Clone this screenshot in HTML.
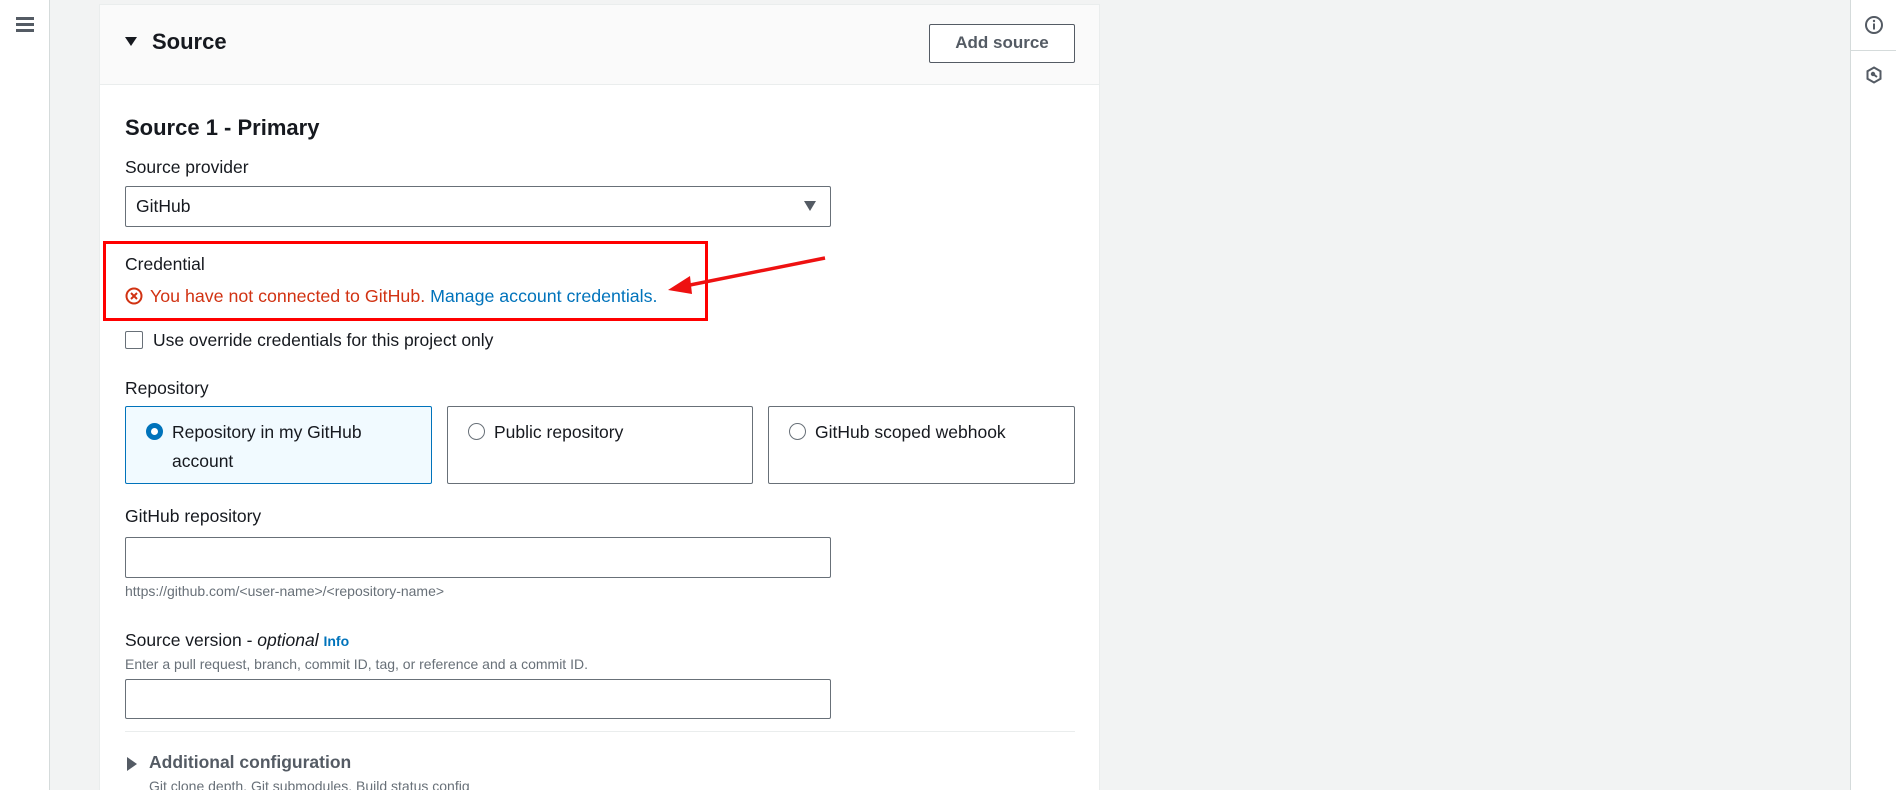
<!DOCTYPE html>
<html style="overflow:hidden;width:1896px;height:790px"><head><style>
*{box-sizing:border-box;margin:0;padding:0}
body{width:1896px;height:790px;overflow:hidden;background:#f2f3f3;font-family:"Liberation Sans",sans-serif;color:#16191f;position:relative}
.a{position:absolute;white-space:nowrap}
.lbl{font-size:17.5px;color:#16191f}
.inp{position:absolute;border:1.5px solid #687078;border-radius:2px;background:#fff}
.tile{position:absolute;top:406px;height:78px;border:1.5px solid #687078;border-radius:2px;background:#fff}
.radio{position:absolute;left:20px;top:16px;width:17px;height:17px;border:1.5px solid #687078;border-radius:50%;background:#fff}
.tt{position:absolute;left:46px;top:11px;font-size:17.5px;line-height:29px}
</style></head><body>
<div class="a" style="left:0;top:0;width:50px;height:790px;background:#fff;border-right:1.5px solid #d5dbdb"></div>
<div class="a" style="left:16px;top:17px;width:18px;height:3px;background:#545b64"></div>
<div class="a" style="left:16px;top:23px;width:18px;height:3px;background:#545b64"></div>
<div class="a" style="left:16px;top:29px;width:18px;height:3px;background:#545b64"></div>
<div class="a" style="left:1850px;top:0;width:46px;height:790px;background:#fff;border-left:1.5px solid #d5dbdb"></div>
<div class="a" style="left:1851px;top:50px;width:45px;height:1px;background:#d5dbdb"></div>
<svg class="a" style="left:1864px;top:15px" width="20" height="20" viewBox="0 0 20 20"><circle cx="10" cy="10" r="8" fill="none" stroke="#545b64" stroke-width="2"/><rect x="9" y="8.5" width="2" height="6" fill="#545b64"/><circle cx="10" cy="6" r="1.2" fill="#545b64"/></svg>
<svg class="a" style="left:1865px;top:66px" width="18" height="18" viewBox="0 0 18 18"><path d="M9 1.5L15.5 5.2V12.8L9 16.5L2.5 12.8V5.2Z" fill="none" stroke="#545b64" stroke-width="2"/><circle cx="8" cy="8" r="2.2" fill="#545b64"/><path d="M8 8L12 11" stroke="#545b64" stroke-width="2"/></svg>
<div class="a" style="left:99px;top:4px;width:1001px;height:786px;background:#fff;border:1px solid #eaeded;border-bottom:none"></div>
<div class="a" style="left:100px;top:5px;width:999px;height:80px;background:#fafafa;border-bottom:1px solid #eaeded"></div>
<svg class="a" style="left:124px;top:36px" width="14" height="12" viewBox="0 0 14 12"><path d="M1 1H13L7 10Z" fill="#16191f"/></svg>
<div class="a" style="left:152px;top:28px;font-size:22px;font-weight:bold;line-height:28px">Source</div>
<div class="a" style="left:929px;top:24px;width:146px;height:39px;border:1.5px solid #545b64;border-radius:2px;background:#fff;font-size:17px;font-weight:bold;color:#545b64;text-align:center;line-height:36px">Add source</div>

<div class="a" style="left:125px;top:114px;font-size:22px;font-weight:bold;line-height:28px">Source 1 - Primary</div>
<div class="a lbl" style="left:125px;top:157px">Source provider</div>
<div class="inp" style="left:125px;top:186px;width:706px;height:41px"></div>
<div class="a" style="left:136px;top:196px;font-size:17.5px">GitHub</div>
<svg class="a" style="left:803px;top:200px" width="14" height="12" viewBox="0 0 14 12"><path d="M1 1H13L7 11Z" fill="#545b64"/></svg>

<div class="a lbl" style="left:125px;top:254px">Credential</div>
<svg class="a" style="left:125px;top:287px" width="18" height="18" viewBox="0 0 18 18"><circle cx="9" cy="9" r="7.5" fill="none" stroke="#d13212" stroke-width="2"/><path d="M6 6L12 12M12 6L6 12" stroke="#d13212" stroke-width="2"/></svg>
<div class="a" style="left:150px;top:286px;font-size:17.8px;color:#d13212">You have not connected to GitHub. <span style="color:#0073bb">Manage account credentials.</span></div>
<div class="a" style="left:103px;top:241px;width:605px;height:80px;border:3px solid #ff0000"></div>
<svg class="a" style="left:660px;top:250px" width="170" height="50" viewBox="0 0 170 50"><path d="M165 8L20 37" stroke="#ee1111" stroke-width="3.5"/><path d="M8 40L30 26L32 44Z" fill="#ee1111"/></svg>

<div class="a" style="left:125px;top:331px;width:18px;height:18px;border:1.5px solid #687078;border-radius:2px;background:#fff"></div>
<div class="a lbl" style="left:153px;top:330px">Use override credentials for this project only</div>

<div class="a lbl" style="left:125px;top:378px">Repository</div>
<div class="tile" style="left:125px;width:307px;background:#f1faff;border-color:#0073bb">
<div class="radio" style="border:5px solid #0073bb"></div>
<div class="tt">Repository in my GitHub<br>account</div></div>
<div class="tile" style="left:447px;width:306px"><div class="radio"></div><div class="tt">Public repository</div></div>
<div class="tile" style="left:768px;width:307px"><div class="radio"></div><div class="tt">GitHub scoped webhook</div></div>

<div class="a lbl" style="left:125px;top:506px">GitHub repository</div>
<div class="inp" style="left:125px;top:537px;width:706px;height:41px"></div>
<div class="a" style="left:125px;top:583px;font-size:14px;color:#687078">https://github.com/&lt;user-name&gt;/&lt;repository-name&gt;</div>

<div class="a lbl" style="left:125px;top:630px">Source version - <i>optional</i> <b style="color:#0073bb;font-size:14px">Info</b></div>
<div class="a" style="left:125px;top:656px;font-size:14px;color:#687078">Enter a pull request, branch, commit ID, tag, or reference and a commit ID.</div>
<div class="inp" style="left:125px;top:679px;width:706px;height:40px"></div>
<div class="a" style="left:125px;top:731px;width:950px;height:1px;background:#eaeded"></div>
<svg class="a" style="left:126px;top:756px" width="12" height="16" viewBox="0 0 12 16"><path d="M1 1V15L11 8Z" fill="#545b64"/></svg>
<div class="a" style="left:149px;top:752px;font-size:17.5px;font-weight:bold;color:#545b64">Additional configuration</div>
<div class="a" style="left:149px;top:778px;font-size:14px;color:#687078">Git clone depth, Git submodules, Build status config</div>
</body></html>
